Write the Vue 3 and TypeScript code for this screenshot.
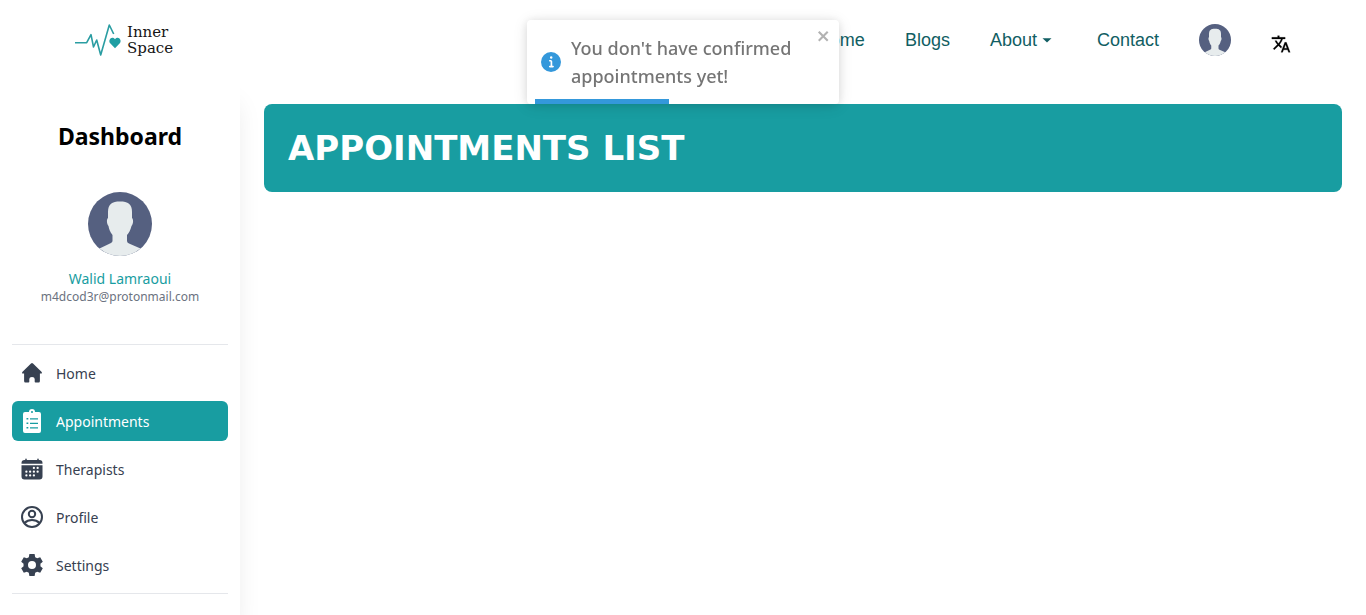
<script setup lang="ts">
import { ref } from 'vue'

interface MenuItem {
  label: string
  icon: 'home' | 'clipboard' | 'calendar' | 'person' | 'gear'
}

const menu: MenuItem[] = [
  { label: 'Home', icon: 'home' },
  { label: 'Appointments', icon: 'clipboard' },
  { label: 'Therapists', icon: 'calendar' },
  { label: 'Profile', icon: 'person' },
  { label: 'Settings', icon: 'gear' },
]

const active = ref('Appointments')
const toastOpen = ref(true)
const progress = ref(45.3)
</script>

<template>
  <div class="page">
    <header class="topbar">
      <a href="#" class="logo" aria-label="Inner Space">
        <svg class="pulse" viewBox="0 0 50 40" aria-hidden="true">
          <path d="M1 22.7H12.7L17 14.7L19.5 27L22.7 20L26.7 35L35.3 5L39.7 14" fill="none" stroke="#2a9da2" stroke-width="1.6" stroke-linejoin="round" />
          <path d="M41 28.2L36.2 23.3C33.6 20.3 37.7 15.2 41 19.3C44.3 15.2 48.4 20.3 45.8 23.3Z" fill="#1f9ea3" />
        </svg>
        <span class="logo-name"><span>Inner</span><span>Space</span></span>
      </a>
      <nav class="nav">
        <a href="#">Home</a>
        <a href="#">Blogs</a>
        <button type="button" class="about">
          About
          <svg viewBox="0 0 20 20" width="20" height="20" aria-hidden="true"><path d="M5.5 8.2h9L10 12.6z" fill="currentColor" /></svg>
        </button>
        <a href="#">Contact</a>
        <button type="button" class="account" aria-label="Account">
          <svg viewBox="0 0 64 64" class="avatar small" aria-hidden="true">
            <circle cx="32" cy="32" r="32" fill="#556080" />
            <path d="M20 26V20C20 12 24 9.500 32 9.500S44 12 44 20V26C45.500 27 45.500 32 43.500 34C42.500 38 41 41 39 43V49Q39 50.500 41 51.500L52.500 56.500A32 32 0 0 1 11.500 56.500L23 51Q24.500 50 24.500 49V43C22 40 21 37 20.500 34C18.500 32 18.500 27 20 26Z" fill="#e7eced" />
          </svg>
        </button>
        <button type="button" class="language" aria-label="Change language">
          <svg viewBox="0 0 24 24" width="20" height="20" aria-hidden="true">
            <path d="M12.870 15.070l-2.540-2.510.030-.030c1.740-1.940 2.980-4.170 3.710-6.530H17V4h-7V2H8v2H1v1.990h11.170C11.500 7.920 10.440 9.750 9 11.350 8.070 10.320 7.300 9.190 6.690 8h-2c.730 1.630 1.730 3.170 2.980 4.560l-5.090 5.020L4 19l5-5 3.110 3.110.760-2.040zM18.500 10h-2L12 22h2l1.120-3h4.750L21 22h2l-4.500-12zm-2.620 7l1.620-4.330L19.120 17h-3.240z" fill="#000" stroke="#000" stroke-width=".3" />
          </svg>
        </button>
      </nav>
    </header>

    <div class="body">
      <aside class="sidebar">
        <h2>Dashboard</h2>
        <div class="user">
          <svg viewBox="0 0 64 64" class="avatar" aria-hidden="true">
            <circle cx="32" cy="32" r="32" fill="#556080" />
            <path d="M20 26V20C20 12 24 9.500 32 9.500S44 12 44 20V26C45.500 27 45.500 32 43.500 34C42.500 38 41 41 39 43V49Q39 50.500 41 51.500L52.500 56.500A32 32 0 0 1 11.500 56.500L23 51Q24.500 50 24.500 49V43C22 40 21 37 20.500 34C18.500 32 18.500 27 20 26Z" fill="#e7eced" />
          </svg>
          <p class="name">Walid Lamraoui</p>
          <p class="email">m4dcod3r@protonmail.com</p>
        </div>
        <nav class="menu">
          <a
            v-for="item in menu"
            :key="item.label"
            href="#"
            :class="{ active: item.label === active }"
            @click.prevent="active = item.label"
          >
            <svg v-if="item.icon === 'home'" viewBox="0 0 24 24" aria-hidden="true">
              <path d="M12 2Q12.500 2 13 2.500L21.700 11Q22.500 12.500 21.300 12.500H19.900V20Q19.900 21.500 18.700 21.500H15.500Q14.700 21.500 14.700 20.700V18Q14.700 16 12 16T9.300 18V20.700Q9.300 21.500 8.500 21.500H5.300Q4.100 21.500 4.100 20V12.500H2.700Q1.500 12.500 2.300 11L11 2.500Q11.500 2 12 2Z" fill="currentColor" />
            </svg>
            <svg v-else-if="item.icon === 'clipboard'" viewBox="0 0 24 24" aria-hidden="true">
              <path fill-rule="evenodd" d="M5 3H9A3 3 0 0 1 15 3H19A2 2 0 0 1 21 5V22A2 2 0 0 1 19 24H5A2 2 0 0 1 3 22V5A2 2 0 0 1 5 3ZM12 2A1 1 0 1 0 12 4A1 1 0 1 0 12 2ZM6.500 9H8.300V10.600H6.500ZM10 9.200H18V10.400H10ZM6.500 13.500H8.300V15.100H6.500ZM10 13.700H18V14.900H10ZM6.500 18H8.300V19.600H6.500ZM10 18.200H18V19.400H10Z" fill="currentColor" />
            </svg>
            <svg v-else-if="item.icon === 'calendar'" viewBox="0 0 512 512" aria-hidden="true">
              <path d="M480 128a64 64 0 0 0-64-64h-16V48a16 16 0 0 0-32 0v16H144V48a16 16 0 0 0-32 0v16H96a64 64 0 0 0-64 64v12a4 4 0 0 0 4 4h440a4 4 0 0 0 4-4zM32 176V416a64 64 0 0 0 64 64H416a64 64 0 0 0 64-64V176Z" fill="currentColor" />
              <g fill="#fff">
                <circle cx="296" cy="232" r="24" /><circle cx="376" cy="232" r="24" />
                <circle cx="136" cy="312" r="24" /><circle cx="216" cy="312" r="24" /><circle cx="296" cy="312" r="24" /><circle cx="376" cy="312" r="24" />
                <circle cx="136" cy="392" r="24" /><circle cx="216" cy="392" r="24" /><circle cx="296" cy="392" r="24" />
              </g>
            </svg>
            <svg v-else-if="item.icon === 'person'" viewBox="0 0 24 24" aria-hidden="true">
              <g fill="none" stroke="currentColor" stroke-width="2">
                <circle cx="12" cy="12" r="10" />
                <circle cx="12" cy="9" r="3.200" />
                <path d="M4.500 18Q7.500 15 12 15T19.500 18" />
              </g>
            </svg>
            <svg v-else viewBox="0 0 24 24" aria-hidden="true">
              <path fill-rule="evenodd" d="M9.400 1H14.600L15.200 4.200Q16.200 4.600 17.200 5.300L20.200 4.200L22.800 8.700L20.400 10.800Q20.600 12 20.400 13.200L22.800 15.300L20.200 19.800L17.200 18.700Q16.200 19.400 15.200 19.800L14.600 23H9.400L8.800 19.800Q7.800 19.400 6.800 18.700L3.800 19.800L1.200 15.300L3.600 13.200Q3.400 12 3.600 10.800L1.200 8.700L3.800 4.200L6.800 5.300Q7.800 4.600 8.800 4.200ZM12 8A4 4 0 1 0 12 16A4 4 0 1 0 12 8Z" fill="currentColor" />
            </svg>
            {{ item.label }}
          </a>
        </nav>
      </aside>
      <main class="content">
        <h1>APPOINTMENTS LIST</h1>
      </main>
    </div>

    <div v-if="toastOpen" class="toast" role="alert">
      <svg class="info" viewBox="0 0 24 24" aria-hidden="true">
        <path d="M12 0a12 12 0 1 0 12 12A12 12 0 0 0 12 0zm.250 5a1.500 1.500 0 1 1-1.500 1.500 1.500 1.500 0 0 1 1.500-1.500zm2.250 13.500h-4a1 1 0 0 1 0-2h.750a.250.250 0 0 0 .250-.250v-4.500a.250.250 0 0 0-.250-.250h-.750a1 1 0 0 1 0-2h1a2 2 0 0 1 2 2v4.750a.250.250 0 0 0 .250.250h.750a1 1 0 1 1 0 2z" fill="#3498db" />
      </svg>
      <p>You don't have confirmed appointments yet!</p>
      <button type="button" class="close" aria-label="Close" @click="toastOpen = false">
        <svg viewBox="0 0 14 16" width="14" height="16" aria-hidden="true">
          <path fill-rule="evenodd" d="M7.710 8.230l3.750 3.750-1.480 1.480-3.750-3.750-3.750 3.750L1 11.980l3.750-3.750L1 4.480 2.480 3l3.750 3.750L9.980 3l1.480 1.480-3.750 3.750z" fill="#b2b2b2" />
        </svg>
      </button>
      <div class="track"><div class="bar" :style="{ width: progress + '%' }"></div></div>
    </div>
  </div>
</template>

<style>
body {
  margin: 0;
  background: #fff;
}
</style>

<style scoped>
.page {
  display: flex;
  flex-direction: column;
  height: 100vh;
  overflow: hidden;
  font-family: 'Noto Sans', 'Open Sans', sans-serif;
}
h1, h2, p {
  margin: 0;
}
a {
  color: inherit;
  text-decoration: none;
}
button {
  padding: 0;
  border: 0;
  background: none;
  color: inherit;
  font: inherit;
  cursor: pointer;
}
svg {
  display: block;
  flex: none;
}
.topbar {
  display: flex;
  align-items: center;
  justify-content: space-between;
  flex: none;
  height: 80px;
  padding: 0 75px 0 74px;
}
.logo {
  display: flex;
  align-items: center;
  gap: 3px;
}
.pulse {
  width: 50px;
  height: 40px;
}
.logo-name {
  display: flex;
  flex-direction: column;
  color: #161616;
  font: 15px/16px 'DejaVu Serif', serif;
}
.nav {
  display: flex;
  align-items: center;
  gap: 40px;
  color: #115e63;
  font: 18px/24px 'Liberation Sans', Arial, sans-serif;
}
.about {
  display: flex;
  align-items: center;
}
.language {
  padding-top: 8px;
}
.avatar {
  width: 64px;
  height: 64px;
}
.avatar.small {
  width: 32px;
  height: 32px;
}
.body {
  display: flex;
  flex: 1;
  min-height: 0;
}
.sidebar {
  flex: none;
  box-sizing: border-box;
  width: 240px;
  padding: 40px 12px 0;
  background: #fff;
  box-shadow: 0 20px 25px -5px rgba(0, 0, 0, 0.1);
}
h2 {
  font-size: 23px;
  line-height: 32px;
  text-align: center;
}
.user {
  display: flex;
  flex-direction: column;
  align-items: center;
  padding: 40px 0 39px;
}
.name {
  margin-top: 13px;
  color: #189da1;
  font-size: 14px;
  line-height: 20px;
}
.email {
  color: #6b7280;
  font-size: 12px;
  line-height: 16px;
}
.menu {
  display: flex;
  flex-direction: column;
  gap: 8px;
  padding: 8px 0;
  border-top: 1px solid #e5e7eb;
  border-bottom: 1px solid #e5e7eb;
}
.menu a {
  display: flex;
  align-items: center;
  gap: 12px;
  height: 40px;
  padding: 0 8px;
  border-radius: 6px;
  color: #374151;
  font-size: 14px;
}
.menu a.active {
  background: #189da1;
  color: #fff;
}
.menu svg {
  width: 24px;
  height: 24px;
}
.content {
  flex: 1;
  padding: 24px;
}
h1 {
  padding: 24px;
  border-radius: 8px;
  background: #189da1;
  color: #fff;
  font: bold 34px/40px 'DejaVu Sans', sans-serif;
}
.toast {
  position: fixed;
  top: 20px;
  left: 50%;
  display: flex;
  align-items: center;
  gap: 10px;
  box-sizing: border-box;
  width: 312px;
  padding: 14px;
  overflow: hidden;
  transform: translateX(-50%);
  border-radius: 4px;
  background: #fff;
  box-shadow: 0 1px 10px rgba(0, 0, 0, 0.1), 0 2px 15px rgba(0, 0, 0, 0.1);
  color: #757575;
  font-size: 18px;
  font-weight: 500;
  line-height: 28px;
}
.toast p {
  flex: 1;
  padding-right: 20px;
}
.info {
  width: 20px;
  height: 20px;
}
.close {
  position: absolute;
  top: 8px;
  right: 8px;
}
.track {
  position: absolute;
  right: 8px;
  bottom: 0;
  left: 8px;
  height: 5px;
}
.bar {
  height: 5px;
  background: #3498db;
}
</style>
